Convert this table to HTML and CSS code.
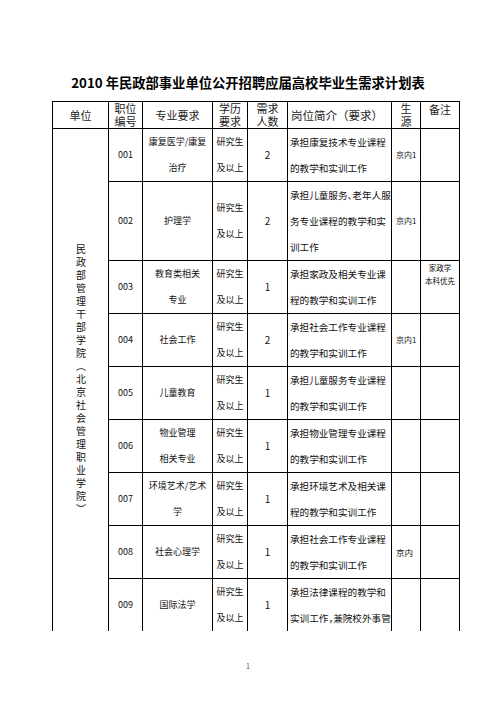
FILE: index.html
```html
<!DOCTYPE html>
<html lang="zh-CN">
<head>
<meta charset="utf-8">
<title>2010年民政部事业单位公开招聘应届高校毕业生需求计划表</title>
<link rel="stylesheet" href="styles.css">
</head>
<body>
<div class="page">
  <h1 class="title">2010 年民政部事业单位公开招聘应届高校毕业生需求计划表</h1>
  <table class="plan">
    <colgroup>
      <col class="c-unit"><col class="c-no"><col class="c-major"><col class="c-edu"><col class="c-num"><col class="c-desc"><col class="c-src"><col class="c-note">
    </colgroup>
    <thead>
      <tr class="r-head">
        <th>单位</th>
        <th class="two">职位<br>编号</th>
        <th>专业要求</th>
        <th class="two">学历<br>要求</th>
        <th class="two">需求<br>人数</th>
        <th class="left">岗位简介（要求）</th>
        <th class="two">生<br>源</th>
        <th class="top">备注</th>
      </tr>
    </thead>
    <tbody>
      <tr class="r2">
        <td rowspan="9" class="unit"><div class="vert">民政部管理干部学院（北京社会管理职业学院）</div></td>
        <td class="no">001</td>
        <td class="major">康复医学/康复<br>治疗</td>
        <td class="edu">研究生<br>及以上</td>
        <td class="num">2</td>
        <td class="desc">承担康复技术专业课程<br>的教学和实训工作</td>
        <td class="src">京内1</td>
        <td class="note"></td>
      </tr>
      <tr class="r3">
        <td class="no">002</td>
        <td class="major">护理学</td>
        <td class="edu">研究生<br>及以上</td>
        <td class="num">2</td>
        <td class="desc">承担儿童服务<span class="pun">、</span>老年人服<br>务专业课程的教学和实<br>训工作</td>
        <td class="src">京内1</td>
        <td class="note"></td>
      </tr>
      <tr class="r2b">
        <td class="no">003</td>
        <td class="major">教育类相关<br>专业</td>
        <td class="edu">研究生<br>及以上</td>
        <td class="num">1</td>
        <td class="desc">承担家政及相关专业课<br>程的教学和实训工作</td>
        <td class="src"></td>
        <td class="note">家政学<br>本科优先</td>
      </tr>
      <tr class="r2a">
        <td class="no">004</td>
        <td class="major">社会工作</td>
        <td class="edu">研究生<br>及以上</td>
        <td class="num">2</td>
        <td class="desc">承担社会工作专业课程<br>的教学和实训工作</td>
        <td class="src">京内1</td>
        <td class="note"></td>
      </tr>
      <tr class="r2b">
        <td class="no">005</td>
        <td class="major">儿童教育</td>
        <td class="edu">研究生<br>及以上</td>
        <td class="num">1</td>
        <td class="desc">承担儿童服务专业课程<br>的教学和实训工作</td>
        <td class="src"></td>
        <td class="note"></td>
      </tr>
      <tr class="r2b">
        <td class="no">006</td>
        <td class="major">物业管理<br>相关专业</td>
        <td class="edu">研究生<br>及以上</td>
        <td class="num">1</td>
        <td class="desc">承担物业管理专业课程<br>的教学和实训工作</td>
        <td class="src"></td>
        <td class="note"></td>
      </tr>
      <tr class="r2b">
        <td class="no">007</td>
        <td class="major">环境艺术/艺术<br>学</td>
        <td class="edu">研究生<br>及以上</td>
        <td class="num">1</td>
        <td class="desc">承担环境艺术及相关课<br>程的教学和实训工作</td>
        <td class="src"></td>
        <td class="note"></td>
      </tr>
      <tr class="r2a">
        <td class="no">008</td>
        <td class="major">社会心理学</td>
        <td class="edu">研究生<br>及以上</td>
        <td class="num">1</td>
        <td class="desc">承担社会工作专业课程<br>的教学和实训工作</td>
        <td class="src src-lg">京内</td>
        <td class="note"></td>
      </tr>
      <tr class="r-last">
        <td class="no">009</td>
        <td class="major">国际法学</td>
        <td class="edu">研究生<br>及以上</td>
        <td class="num">1</td>
        <td class="desc">承担法律课程的教学和<br>实训工作<span class="pun">，</span>兼院校外事管</td>
        <td class="src"></td>
        <td class="note"></td>
      </tr>
    </tbody>
  </table>
  <div class="pageno">1</div>
</div>
</body>
</html>
```
FILE: styles.css
```css
html, body {
  margin: 0;
  padding: 0;
  background: #ffffff;
}

body {
  width: 496px;
  height: 702px;
  overflow: hidden;
  color: #111;
  font-family: "Noto Sans CJK SC", "Noto Sans", sans-serif;
}

.page {
  padding-top: 73px;
}

.title {
  margin: 0 0 8px;
  text-align: center;
  font-size: 13.3px;
  line-height: 20px;
  font-weight: 700;
  color: #000;
}

.plan {
  margin-left: 52px;
  width: 408px;
  border-collapse: collapse;
  table-layout: fixed;
}

.c-unit { width: 56px; }
.c-no { width: 34px; }
.c-major { width: 70px; }
.c-edu { width: 35px; }
.c-num { width: 40px; }
.c-desc { width: 104px; }
.c-src { width: 29px; }
.c-note { width: 39px; }

.plan th,
.plan td {
  border: 1px solid #000;
  padding: 0;
  vertical-align: middle;
  text-align: center;
  overflow: hidden;
  white-space: nowrap;
}

.plan th {
  font-weight: 400;
  font-size: 11px;
  line-height: 13px;
  color: #222;
}

.plan th.left {
  text-align: left;
  padding-left: 3px;
  font-size: 11.5px;
}

.plan th.top {
  vertical-align: top;
  padding-top: 1px;
}

.r-head { height: 26px; }
.r2 { height: 52px; }
.r3 { height: 79px; }
.r2a { height: 51px; }
.r2b { height: 53px; }
.r-last { height: 48px; }

.r-last td,
.plan td.unit {
  border-bottom: none;
}

.plan td {
  font-size: 9px;
  line-height: 26px;
}

.unit .vert {
  writing-mode: vertical-rl;
  text-orientation: upright;
  margin: 0 auto;
  font-size: 10px;
  line-height: 12px;
  letter-spacing: 3px;
  white-space: nowrap;
  color: #111;
}

.plan td.no {
  font-size: 9px;
}

.plan td.num {
  font-size: 10px;
}

.plan td.desc {
  text-align: left;
  padding-left: 2px;
  font-size: 9.6px;
}

.pun {
  font-feature-settings: "halt" 1;
}

.plan td.src {
  text-align: left;
  padding-left: 4px;
  font-size: 8px;
}

.plan td.src-lg {
  font-size: 8.5px;
}

.plan td.note {
  vertical-align: top;
  font-size: 7.5px;
  line-height: 13px;
  padding-top: 0;
}

.pageno {
  margin-top: 30px;
  text-align: center;
  font-size: 7px;
  line-height: 10px;
  color: #555;
}
```
